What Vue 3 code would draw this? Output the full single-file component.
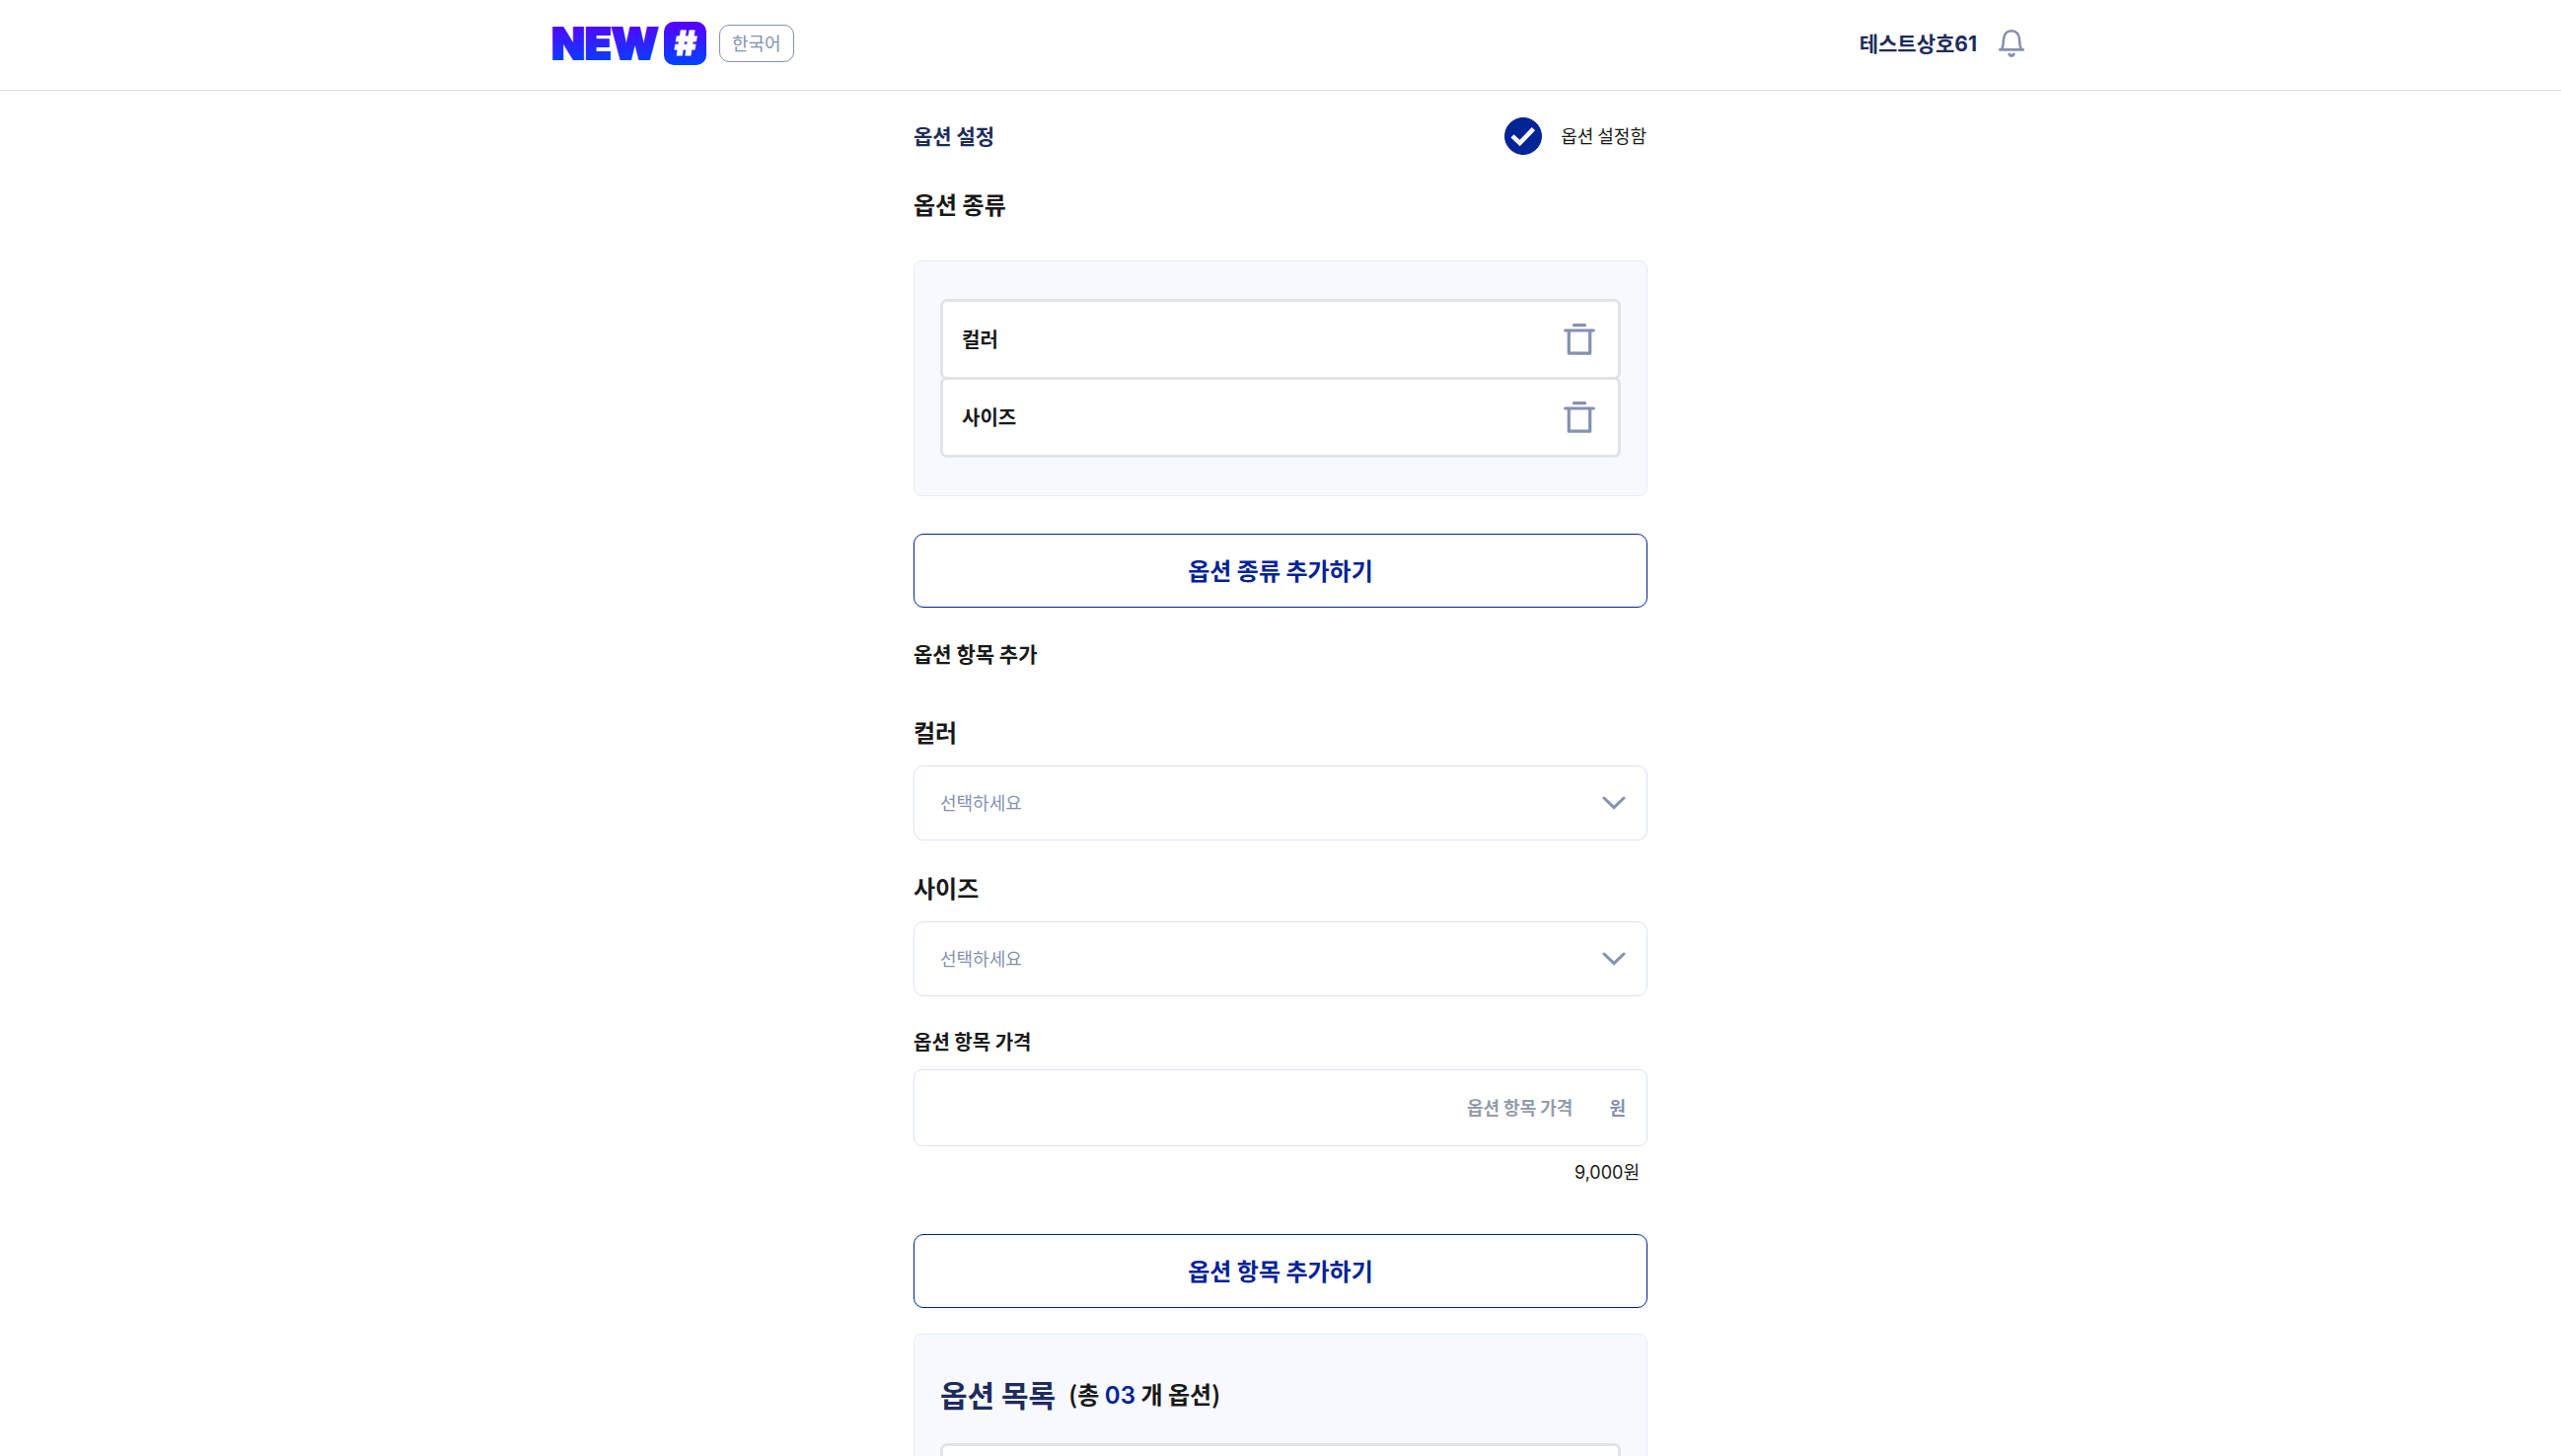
<template>
  <div class="page">
    <header class="topbar">
      <div class="topbar-inner">
        <a class="logo" href="#" aria-label="NEW#">
          <svg width="160" height="54" viewBox="-2 -5 160 54">
            <defs>
              <linearGradient id="brand" gradientUnits="userSpaceOnUse" x1="0" y1="0" x2="0" y2="44">
                <stop offset="0" stop-color="#5a00ff" />
                <stop offset="1" stop-color="#0044ff" />
              </linearGradient>
            </defs>
            <text class="logo-word" x="0" y="38">NEW</text>
            <rect x="114" width="43" height="44" rx="10" fill="url(#brand)" />
            <text class="logo-hash" x="136" y="34">#</text>
          </svg>
        </a>
        <button class="lang" type="button">한국어</button>
        <div class="account">
          <a class="shop" href="#">테스트상호<span class="num">61</span></a>
          <button class="icon-btn" type="button" aria-label="알림">
            <svg width="28" height="30" viewBox="0 0 28 30" fill="none" stroke="#8790b0" stroke-width="2.6" stroke-linecap="round">
              <path d="M2.2 21.4H25.8M4 21.2C5.6 18.4 5.7 15.5 5.9 11.5C6.2 5.6 9.4 2.2 14 2.2S21.8 5.6 22.1 11.5C22.3 15.5 22.4 18.4 24 21.2" />
              <path d="M11.8 26C12.8 28 15.2 28 16.2 26" stroke-width="3" />
            </svg>
          </button>
        </div>
      </div>
    </header>

    <main class="content">
      <div class="column">
        <div class="setting">
          <h1 class="setting-title">옵션 설정</h1>
          <label class="toggle">
            <span class="check">
              <input v-model="enabled" type="checkbox" />
              <svg v-if="enabled" width="38" height="38" viewBox="0 0 38 38" fill="none" stroke="#f7f9ff" stroke-width="4.6">
                <path d="M8 18.8L15.6 26L29.4 11.6" />
              </svg>
            </span>
            <span class="toggle-text">옵션 설정함</span>
          </label>
        </div>

        <h2 class="kinds-title">옵션 종류</h2>
        <section class="panel">
          <ul class="kinds">
            <li v-for="kind in kinds" :key="kind" class="box kind">
              <span class="kind-name">{{ kind }}</span>
              <button class="icon-btn" type="button" :aria-label="kind + ' 삭제'" @click="removeKind(kind)">
                <svg width="32" height="32" viewBox="0 0 32 32" fill="none" stroke="#8790b0" stroke-width="3.2" stroke-linecap="round" stroke-linejoin="round">
                  <path d="M10.5 1.7H21.5M1.7 7H30.3M5.3 7.5V30.2H26.7V7.5" />
                </svg>
              </button>
            </li>
          </ul>
        </section>
        <button class="outline-btn kind-add" type="button">옵션 종류 추가하기</button>

        <h2 class="items-title">옵션 항목 추가</h2>
        <div v-for="(kind, i) in kinds" :key="kind" class="field">
          <label class="field-label" :for="'kind-' + i">{{ kind }}</label>
          <div class="select">
            <select :id="'kind-' + i">
              <option value="">선택하세요</option>
            </select>
            <svg width="24" height="14" viewBox="0 0 24 14" fill="none" stroke="#8790b0" stroke-width="3" stroke-linecap="round">
              <path d="M2 2L12 11.6L22 2" />
            </svg>
          </div>
        </div>

        <label class="price-label" for="price">옵션 항목 가격</label>
        <div class="price">
          <input id="price" v-model="price" type="text" inputmode="numeric" placeholder="옵션 항목 가격" />
          <span class="unit">원</span>
        </div>
        <p class="total"><span class="num">9,000</span>원</p>
        <button class="outline-btn item-add" type="button">옵션 항목 추가하기</button>

        <section class="panel list-panel">
          <div class="list-head">
            <h2>옵션 목록</h2>
            <p>(총 <span class="num count">03</span> 개 옵션)</p>
          </div>
          <div class="box list-item" />
        </section>
      </div>
    </main>
  </div>
</template>

<script setup>
import { ref } from 'vue'

const enabled = ref(true)
const price = ref('')
const kinds = ref(['컬러', '사이즈'])

function removeKind(kind) {
  kinds.value = kinds.value.filter(k => k !== kind)
}
</script>

<style>
body { margin: 0; background: #fff; }
</style>

<style scoped>
.page {
  height: 100vh;
  display: flex; flex-direction: column;
  color: #191919;
  font-family: "Noto Sans CJK KR", sans-serif;
  font-size: 18px;
}
.page * { box-sizing: border-box; }
h1, h2, p, ul { margin: 0; padding: 0; }
button, input, select { font-family: inherit; }
.num { font-family: Inter, sans-serif; line-height: 1; }

.topbar { flex: none; border-bottom: 1px solid #e1e1e1; }
.topbar-inner {
  display: flex; align-items: center;
  max-width: 1510px; height: 91px; margin: 0 auto;
  padding: 0 0 3px 14px;
}
.logo { display: flex; font-family: Inter, sans-serif; font-weight: 900; }
.logo-word { font-size: 44px; fill: url(#brand); stroke: url(#brand); stroke-width: 2px; }
.logo-hash { font-size: 34px; fill: #fff; stroke: #fff; stroke-width: 1px; text-anchor: middle; }
.lang {
  height: 38px; margin-left: 12px; padding: 0 12px 2px;
  border: 1px solid #8790b0; border-radius: 10px;
  background: #fff; color: #8790b0;
  font-size: 18px; line-height: 28px;
}
.account { display: flex; align-items: center; gap: 21px; margin-left: auto; }
.shop { padding-bottom: 2px; color: #1f2b5b; font-size: 21px; font-weight: 700; text-decoration: none; }
.icon-btn { display: grid; padding: 0; border: 0; background: none; cursor: pointer; }

.content { flex: 1; min-height: 0; overflow-y: auto; scrollbar-width: none; }
.column { display: flex; flex-direction: column; max-width: 744px; margin: 0 auto; padding: 27px 0 40px; }

.setting { display: flex; align-items: center; justify-content: space-between; }
.setting-title { padding-bottom: 2px; color: #1f2b5b; font-size: 21px; line-height: 32px; }
.toggle { display: flex; align-items: center; gap: 19px; padding-right: 1px; }
.toggle-text { padding-bottom: 2px; }
.check { display: grid; }
.check > * { grid-area: 1 / 1; }
.check input {
  appearance: none;
  width: 38px; height: 38px; margin: 0;
  border: 1px solid #002395; border-radius: 50%;
}
.check input:checked { background: #002395; }
.check svg { pointer-events: none; }

.kinds-title { margin: 32px 0 39px; font-size: 24px; line-height: 36px; }
.panel { padding: 38px 26px; border: 1px solid #e6ecff; border-radius: 8px; background: #f7f9ff; }
.box { border: 3px solid #e1e3e9; border-radius: 7px; background: #fff; }
.kinds { list-style: none; }
.kind {
  display: flex; align-items: center; justify-content: space-between;
  height: 82px; padding: 0 23px 0 19px;
  font-size: 20px; font-weight: 700;
}
.kind + .kind { margin-top: -3px; }
.kind-name { padding-bottom: 2px; }

.outline-btn {
  height: 75px; padding: 0 20px 3px;
  border: 1px solid #002395; border-radius: 10px;
  background: #fff; color: #002395;
  font-size: 24px; font-weight: 700;
  cursor: pointer;
}
.kind-add { margin-top: 38px; }
.items-title { margin: 30px 0 16px; font-size: 21px; line-height: 32px; }

.field { display: flex; flex-direction: column; gap: 16px; margin-top: 30px; }
.field-label { font-size: 24px; font-weight: 700; line-height: 36px; }
.select { display: grid; align-items: center; }
.select > * { grid-area: 1 / 1; }
.select select {
  appearance: none;
  width: 100%; height: 76px; padding: 0 26px 2px;
  border: 1px solid #dce3f0; border-radius: 10px;
  background: #fff; color: #8790b0;
  font-size: 18px;
}
.select svg { justify-self: end; margin-right: 22px; pointer-events: none; }

.price-label { margin-top: 30px; font-size: 20px; font-weight: 700; line-height: 32px; }
.price {
  display: flex; align-items: center; gap: 37px;
  height: 78px; margin-top: 12px; padding: 0 21px 2px;
  border: 1px solid #dce3f0; border-radius: 8px;
  color: #8790b0; font-weight: 700;
}
.price input {
  flex: 1; min-width: 0; height: 100%; padding: 0;
  border: 0; outline: 0; background: none;
  color: #191919; font-size: 18px; font-weight: 700; text-align: right;
}
.price input::placeholder { color: #959ca9; opacity: 1; }
.total { margin-top: 11px; padding-right: 8px; line-height: 28px; text-align: right; }
.item-add { margin-top: 50px; }

.list-panel { margin-top: 26px; }
.list-head { display: flex; align-items: center; gap: 13px; height: 46px; padding-bottom: 3px; }
.list-head h2 { color: #1f2b5b; font-size: 30px; line-height: 44px; }
.list-head p { font-size: 24px; font-weight: 700; line-height: 44px; }
.count { color: #002395; font-weight: 600; }
.list-item { height: 160px; margin-top: 26px; }
</style>
